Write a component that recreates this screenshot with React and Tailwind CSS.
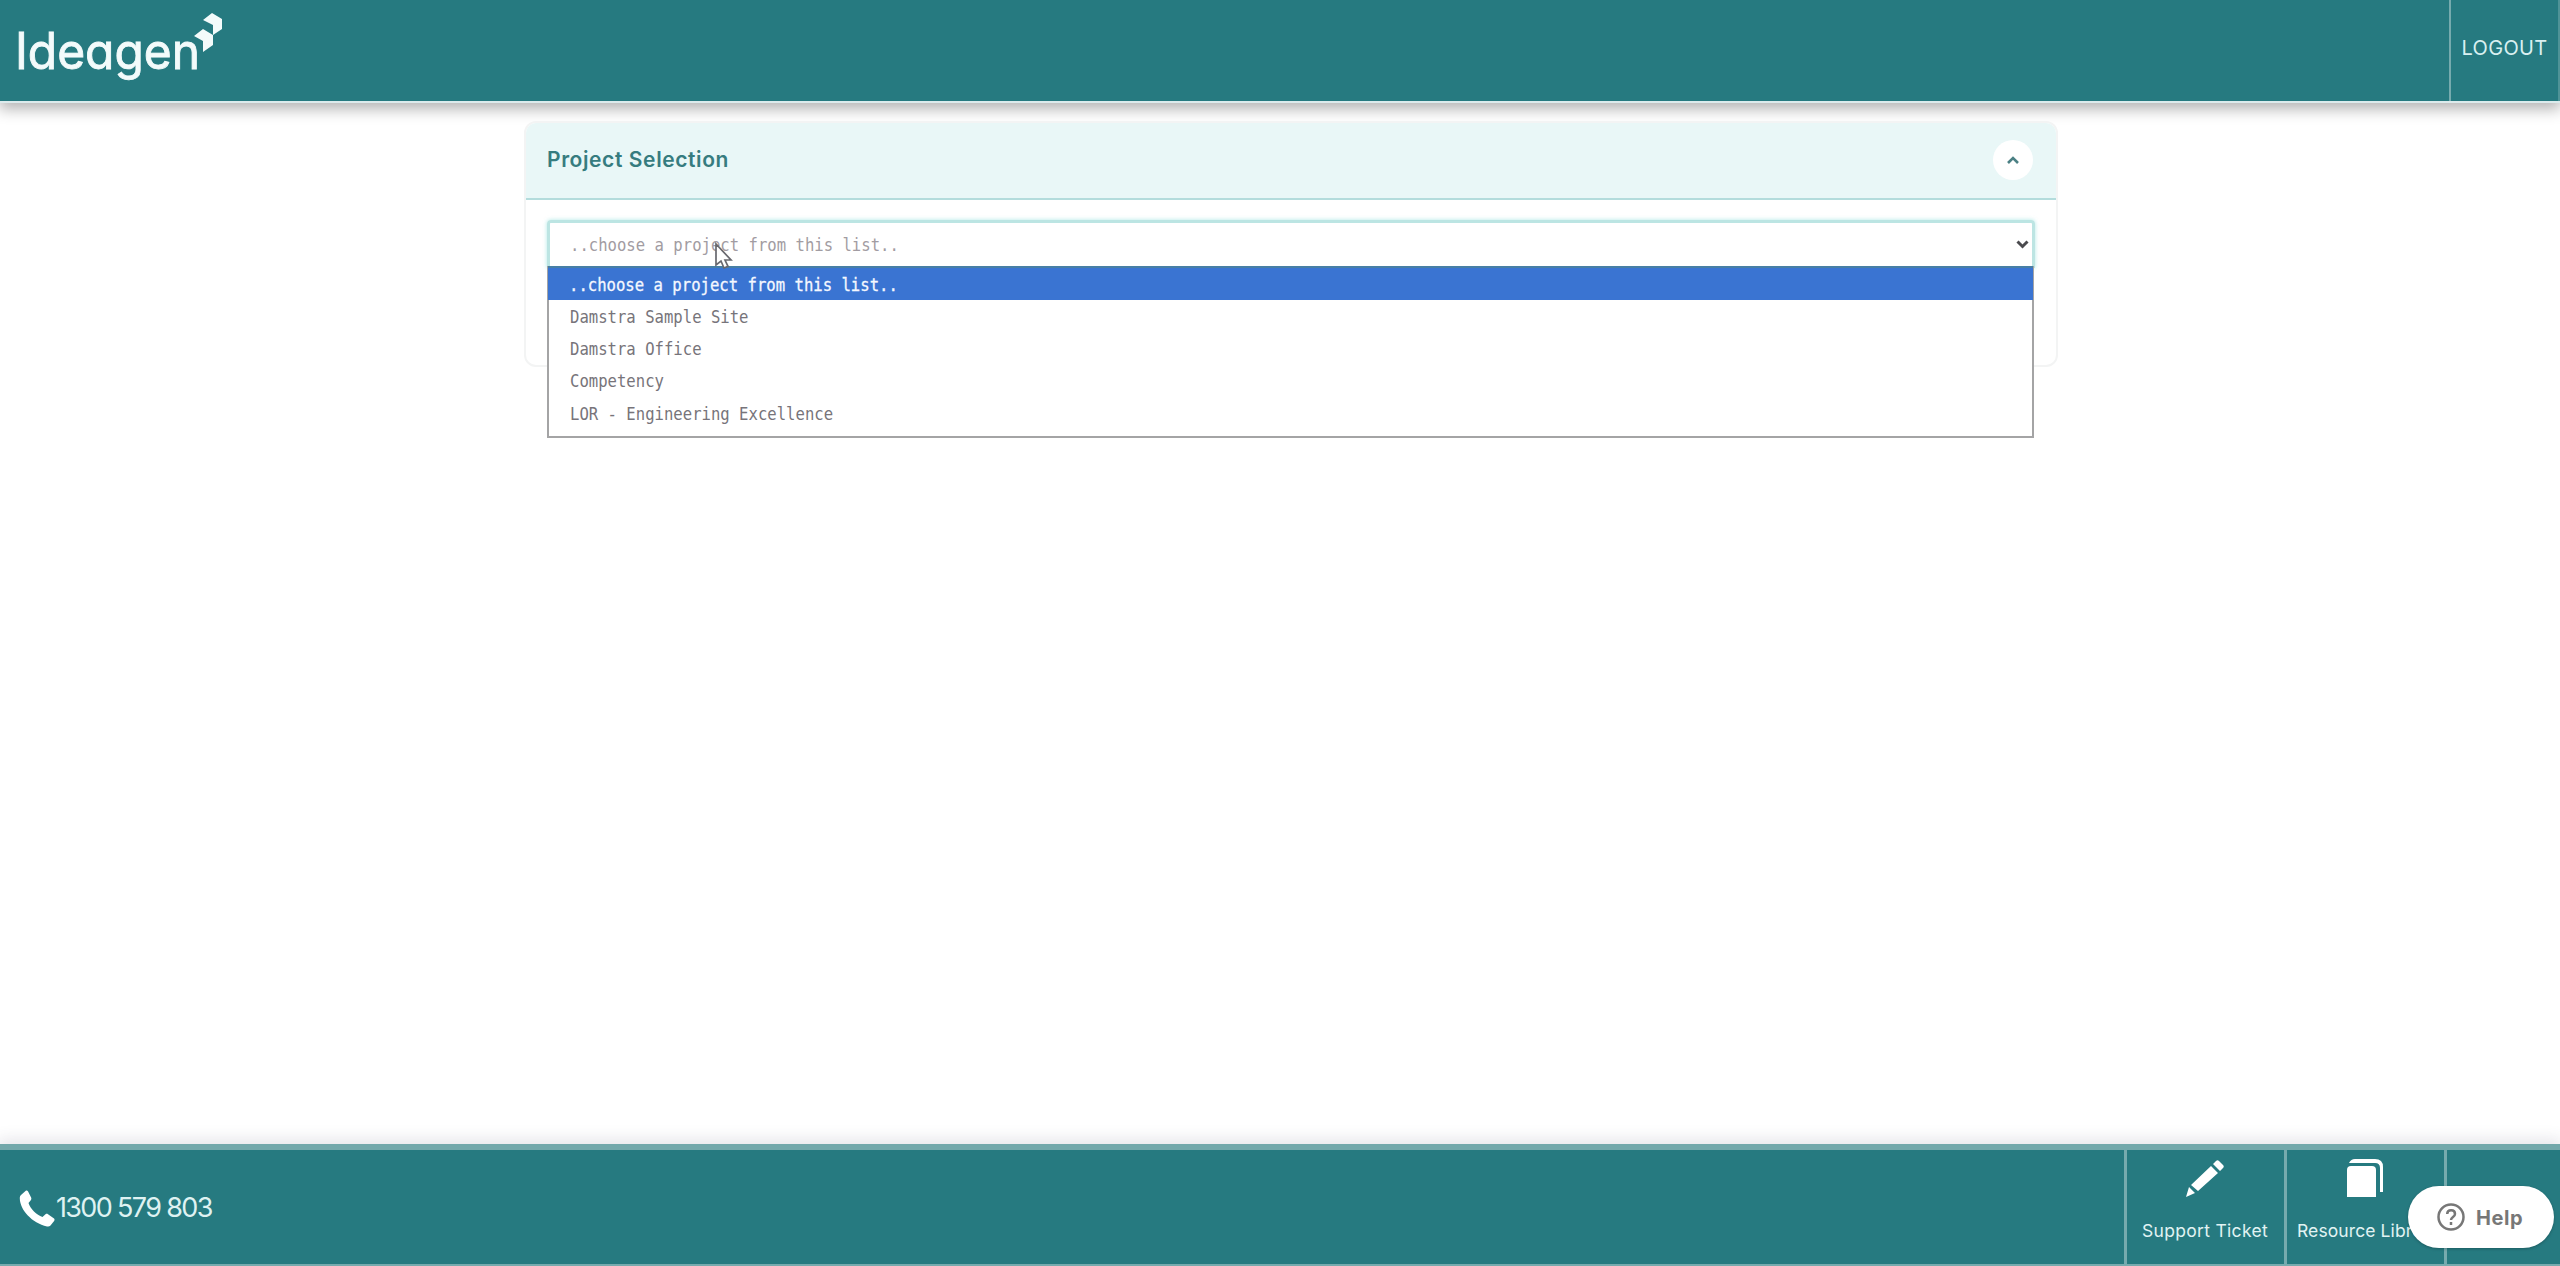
import React from "react";

const options = [
  "Damstra Sample Site",
  "Damstra Office",
  "Competency",
  "LOR - Engineering Excellence",
];

function Logo() {
  return (
    <svg className="ml-4 mt-2 h-[80px] w-[220px]" viewBox="16 8 220 80" role="img" aria-label="Ideagen">
      <text
        x="15"
        y="69"
        fill="#f3fbfb"
        stroke="#f3fbfb"
        strokeWidth="0.9"
        textLength="185"
        lengthAdjust="spacingAndGlyphs"
        className="text-[50px] font-normal [font-family:Inter,sans-serif] [font-feature-settings:'cv11']"
      >
        Ideagen
      </text>
      <path
        fill="#f3fbfb"
        d="M203 20l9-7 10 6v10l-9 6V25zM194 36l9-7 10 6v10l-10 7V41z"
      />
    </svg>
  );
}

function MonoText({ children, className }) {
  return (
    <span
      className={
        "inline-block origin-left scale-x-[0.918] whitespace-pre text-[17px] [font-family:'DejaVu_Sans_Mono',monospace] " +
        className
      }
    >
      {children}
    </span>
  );
}

function Header() {
  return (
    <header className="flex h-[103px] shrink-0 justify-between border-b-2 border-[#dcebec] bg-[#267a80] shadow-[0_5px_14px_1px_rgba(0,0,0,0.3)]">
      <Logo />
      <a className="flex w-[111px] justify-center border-x-2 border-l-[#76abae] border-r-[#4f9397] pt-[35px] text-[20px] leading-[26px] tracking-[0.35px] text-[#d9f0f1]">
        LOGOUT
      </a>
    </header>
  );
}

function ProjectCard() {
  return (
    <section className="mx-auto mt-[18px] h-[246px] w-[1534px] translate-x-[11px] rounded-[12px] border-2 border-[#f3f4f4] bg-white">
      <div className="flex h-[77px] items-center justify-between rounded-t-[10px] border-b-2 border-[#b3dcdc] bg-[#e9f7f7] pl-[21px] pr-[23px]">
        <h1 className="-mt-[2px] text-[21px] font-semibold tracking-[0.6px] text-[#367c7f]">Project Selection</h1>
        <button className="-mt-px flex h-10 w-10 items-center justify-center rounded-full bg-white">
          <svg className="h-3 w-3" viewBox="0 0 12 12" fill="none" stroke="#4b8084" strokeWidth="2.6">
            <path d="M1 9l5-5 5 5" />
          </svg>
        </button>
      </div>
      <div className="relative ml-[21px] mt-[20px] w-[1488px]">
        <div className="flex h-[48px] items-center justify-between rounded-t-[4px] border-[3px] border-b-0 border-[#bce5e3] pl-[20px] pr-[3px] shadow-[0_0_4px_rgba(110,215,210,0.55)]">
          <MonoText className="text-[#a29ca2]">..choose a project from this list..</MonoText>
          <svg className="-mt-[3px] h-[9px] w-[13px]" viewBox="0 0 13 9" fill="none" stroke="#4a4a4e" strokeWidth="3">
            <path d="M1.5 1.5l5 5 5-5" />
          </svg>
        </div>
        <ul className="absolute left-0 top-[46px] z-10 h-[172px] w-[1487px] border-2 border-t-0 border-[#a4a4a5] bg-white">
          <li className="-mx-px flex h-[34px] items-center border-t-2 border-[#477fa5] bg-[#3a74d2] pl-[21px] pt-[3px]">
            <MonoText className="text-[#f5f8ff] [-webkit-text-stroke:0.3px_#f5f8ff]">
              ..choose a project from this list..
            </MonoText>
          </li>
          {options.map((option) => (
            <li key={option} className="flex h-[32.3px] items-center pl-[21px] pt-[3px]">
              <MonoText className="text-[#77747a]">{option}</MonoText>
            </li>
          ))}
        </ul>
        <svg className="absolute left-[167px] top-[22px] z-20 h-[28px] w-[19px]" viewBox="0 0 19 28">
          <path
            d="M2 2v21l5-4 3 7 4-1.700-3-6.300h6z"
            fill="#fff"
            stroke="#68686e"
            strokeWidth="1.7"
          />
        </svg>
      </div>
    </section>
  );
}

function FooterLink({ label, labelClass, children }) {
  return (
    <a className="flex w-[160px] flex-col items-center overflow-hidden border-l-[3px] border-[#76abae] text-[#e1f3f3]">
      <span className="mt-[8px] flex h-[40px] w-[40px] items-center justify-center text-white">{children}</span>
      <span className={"mt-[20px] whitespace-nowrap text-[17.5px] leading-[26px] " + labelClass}>{label}</span>
    </a>
  );
}

function Footer() {
  return (
    <footer className="relative mt-auto flex h-[122px] shrink-0 justify-between border-b-2 border-t-[6px] border-b-[#76abae] border-t-[#73a8ab] bg-[#267a80] shadow-[0_-3px_14px_2px_rgba(70,60,100,0.13)]">
      <div className="flex items-center pl-[19px] text-[#dff2f2]">
        <svg className="mt-[2px] h-[37px] w-[37px]" viewBox="0 0 37 37" fill="#fff">
          <path d="M2 5 6.500 1c1-.7 2-.4 2.600.6l3 6c.5 1 .3 2-.5 2.800L9.500 13c2 6 8 12 14 14l3-2.800c.8-.6 1.700-.6 2.500 0l5.700 4c1 .8 1.100 1.700.4 2.700l-3.600 4.600c-.9 1-2 1.300-3.500 1C13 33 1 20 .8 8.500.8 7 1 6 2 5z" />
        </svg>
        <span className="mt-[2px] text-[27px] leading-[34px] tracking-[-1.65px]">1300 579 803</span>
      </div>
      <nav className="flex">
        <FooterLink label="Support Ticket" labelClass="-ml-px tracking-[0.3px]">
          <svg className="h-[38px] w-[38px] -translate-x-px" viewBox="0 0 38 38" fill="currentColor">
            <path d="M0 38l3-10 6 6zM5 26L25 7l7 7-20 18zM27 5l3-3c1-1 2-1 3 0l4 4c1 1 1 2 0 3l-3 3z" />
          </svg>
        </FooterLink>
        <FooterLink label="Resource Library" labelClass="self-start ml-[10px] tracking-[0.1px]">
          <svg className="h-[38px] w-[38px] -translate-x-px" viewBox="0 0 38 38" fill="currentColor">
            <path d="M1 11q0-4 4-4h21q4 0 4 4v27H1z" />
            <path d="M3 4q2-4 6-4h20q8 0 8 8v25h-3V9q0-5-5-5z" />
          </svg>
        </FooterLink>
        <div className="w-[116px] border-l-[3px] border-[#76abae]" />
      </nav>
      <button className="absolute right-[6px] top-[36px] flex h-[62px] w-[146px] items-center rounded-full bg-white pl-[29px] text-[#777] shadow-[0_1px_3px_rgba(0,0,0,0.25)]">
        <svg className="h-[28px] w-[28px]" viewBox="0 0 28 28" fill="none" stroke="currentColor" strokeWidth="2.5">
          <circle cx="14" cy="14" r="12.500" />
          <path d="M10.200 11c.2-5 7.800-4.700 7.800 0 0 3-4 3-4 6" />
          <path d="M14 19v3" />
        </svg>
        <span className="ml-[11px] mt-[2px] text-[20px] font-bold tracking-[0.6px]">Help</span>
      </button>
    </footer>
  );
}

export default function App() {
  return (
    <div className="flex h-screen flex-col overflow-hidden bg-white [font-family:Inter,sans-serif] [font-feature-settings:'cv11']">
      <Header />
      <ProjectCard />
      <Footer />
    </div>
  );
}
